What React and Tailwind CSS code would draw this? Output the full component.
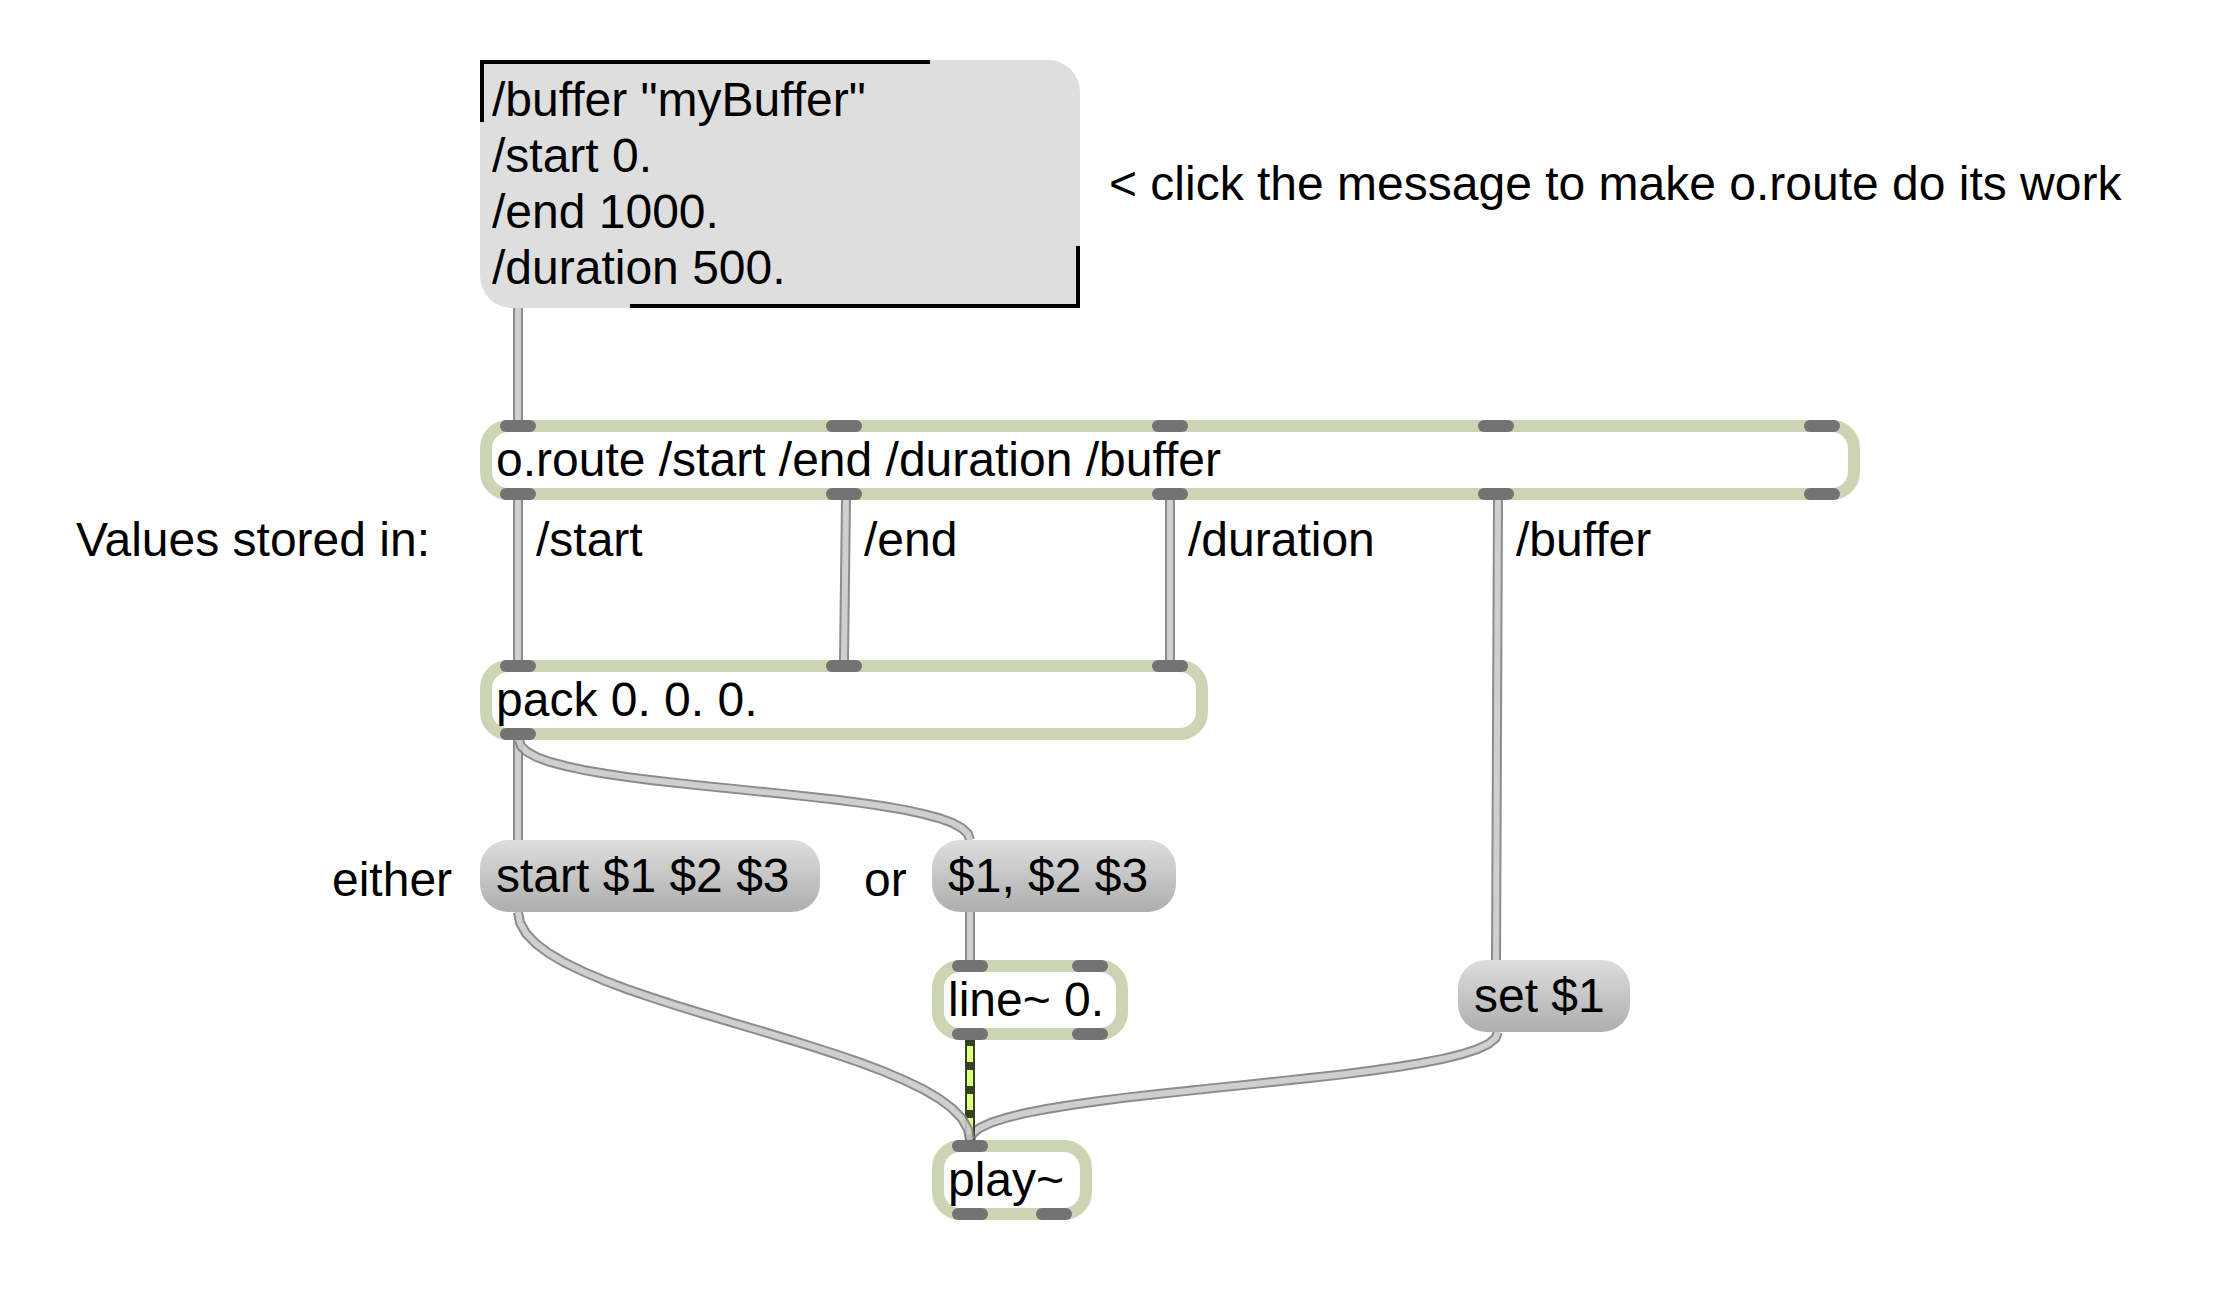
const SEGMENTS = 25;

// Points of a patch cord that leaves its outlet and enters its inlet vertically.
function cordPoints([x0, y0], [x1, y1], bend) {
  const points = [];
  for (let i = 0; i <= SEGMENTS; i++) {
    const t = i / SEGMENTS;
    const u = 1 - t;
    const x = x0 * (u * u * u + 3 * u * u * t) + x1 * (3 * u * t * t + t * t * t);
    const y =
      y0 * u * u * u + (y0 + bend) * 3 * u * u * t + (y1 - bend) * 3 * u * t * t + y1 * t * t * t;
    points.push(`${x.toFixed(1)},${y.toFixed(1)}`);
  }
  return points.join(" ");
}

function Cord({ from, to, bend = 0 }) {
  const points = bend ? cordPoints(from, to, bend) : `${from} ${to}`;
  return (
    <g fill="none" opacity="0.9">
      <polyline points={points} stroke="#808080" strokeWidth="10" />
      <polyline points={points} stroke="#cacaca" strokeWidth="6" />
    </g>
  );
}

function SignalCord({ x, top, bottom }) {
  return (
    <g>
      <line x1={x} y1={top} x2={x} y2={bottom} stroke="#373f22" strokeWidth="10" />
      <line x1={x} y1={top + 6} x2={x} y2={bottom} stroke="#dbff80" strokeWidth="6" strokeDasharray="16 8" />
    </g>
  );
}

function Ports({ count, className }) {
  return (
    <div className={`absolute flex h-3 justify-between ${className}`}>
      {Array.from({ length: count }, (_, i) => (
        <span key={i} className="h-3 w-9 rounded-full bg-[#737373]" />
      ))}
    </div>
  );
}

function ObjectBox({ text, inlets, outlets, className }) {
  return (
    <div className={`absolute rounded-[28px] border-12 border-[#ccd5b3] bg-white pl-1 ${className}`}>
      {text}
      <Ports count={inlets} className="-top-3 right-2 left-2" />
      <Ports count={outlets} className="right-2 -bottom-3 left-2" />
    </div>
  );
}

function Message({ text, className }) {
  return (
    <button
      type="button"
      className={`absolute rounded-[28px] bg-linear-to-b from-[#dedede] to-[#aeaeae] py-2 pl-4 text-left ${className}`}
    >
      {text}
    </button>
  );
}

function Comment({ children, className }) {
  return <p className={`absolute ${className}`}>{children}</p>;
}

export default function App() {
  return (
    <main className="relative min-h-screen w-full overflow-hidden bg-white font-['Liberation_Sans',Arial,sans-serif] text-[48px] leading-[56px] whitespace-nowrap text-black">
      <svg className="absolute inset-0 h-full w-full" aria-hidden="true">
        <Cord from={[518, 308]} to={[518, 420]} />
        <Cord from={[518, 500]} to={[518, 660]} />
        <Cord from={[846, 500]} to={[844, 660]} />
        <Cord from={[1170, 500]} to={[1170, 660]} />
        <Cord from={[1498, 500]} to={[1496, 960]} />
        <Cord from={[518, 740]} to={[518, 840]} />
        <Cord from={[519, 740]} to={[970, 840]} bend={55} />
        <Cord from={[970, 912]} to={[970, 960]} />
        <Cord from={[1498, 1032]} to={[970, 1140]} bend={54} />
        <SignalCord x={970} top={1040} bottom={1140} />
        <Cord from={[518, 912]} to={[970, 1140]} bend={94} />
      </svg>

      <button
        type="button"
        className="absolute top-[60px] left-[480px] w-[600px] rounded-tr-[32px] rounded-bl-[32px] bg-[#dedede] py-3 pl-3 text-left whitespace-pre"
      >
        {'/buffer "myBuffer"\n/start 0.\n/end 1000.\n/duration 500.'}
        <span className="absolute top-0 left-0 h-1 w-3/4 bg-black" />
        <span className="absolute top-0 left-0 h-[62px] w-1 bg-black" />
        <span className="absolute right-0 bottom-0 h-1 w-3/4 bg-black" />
        <span className="absolute right-0 bottom-0 h-[62px] w-1 bg-black" />
      </button>
      <Comment className="top-[156px] left-[1109px]">
        &lt; click the message to make o.route do its work
      </Comment>

      <ObjectBox
        text="o.route /start /end /duration /buffer"
        inlets={5}
        outlets={5}
        className="top-[420px] left-[480px] w-[1380px]"
      />
      <Comment className="top-[512px] left-[76px]">Values stored in:</Comment>
      <Comment className="top-[512px] left-[536px]">/start</Comment>
      <Comment className="top-[512px] left-[864px]">/end</Comment>
      <Comment className="top-[512px] left-[1188px]">/duration</Comment>
      <Comment className="top-[512px] left-[1516px]">/buffer</Comment>

      <ObjectBox
        text="pack 0. 0. 0."
        inlets={3}
        outlets={1}
        className="top-[660px] left-[480px] w-[728px]"
      />

      <Comment className="top-[852px] left-[332px]">either</Comment>
      <Message text="start $1 $2 $3" className="top-[840px] left-[480px] w-[340px]" />
      <Comment className="top-[852px] left-[864px]">or</Comment>
      <Message text="$1, $2 $3" className="top-[840px] left-[932px] w-[244px]" />

      <ObjectBox text="line~ 0." inlets={2} outlets={2} className="top-[960px] left-[932px] w-[196px]" />
      <Message text="set $1" className="top-[960px] left-[1458px] w-[172px]" />
      <ObjectBox text="play~" inlets={1} outlets={2} className="top-[1140px] left-[932px] w-[160px]" />
    </main>
  );
}
